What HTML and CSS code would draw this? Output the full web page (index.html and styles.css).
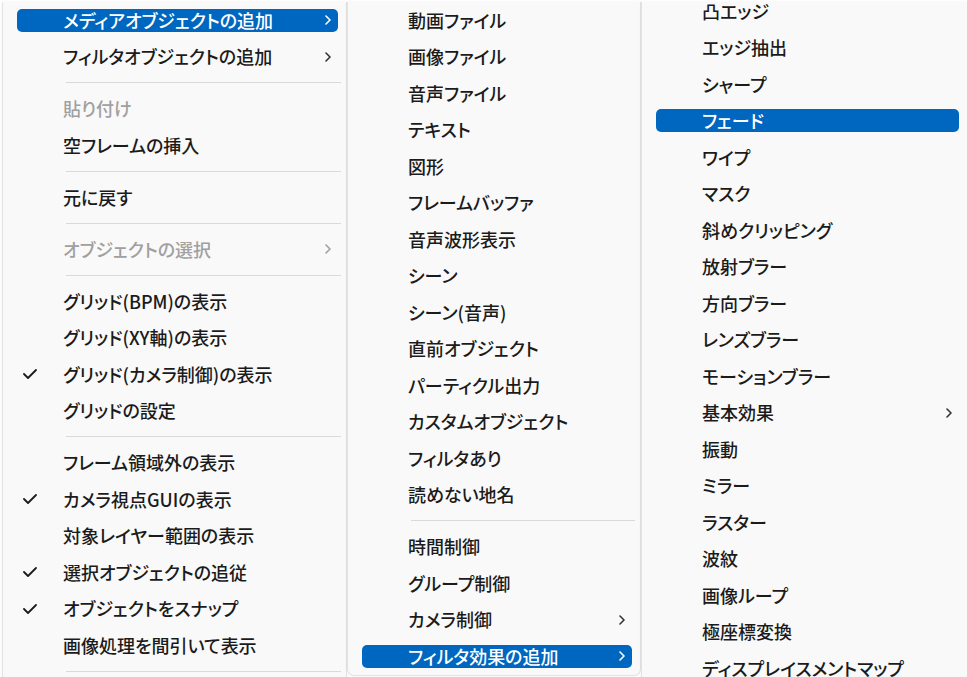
FILE: index.html
```html
<!DOCTYPE html>
<html lang="ja">
<head>
<meta charset="utf-8">
<title>Context menu</title>
<link rel="stylesheet" href="styles.css">
</head>
<body>
<div class="stage">
  <div class="menu menu-main">
    <div class="list">
      <div class="item"><div class="row hl"><span class="mark"></span><span class="label">メディアオブジェクトの追加</span><svg class="chev" viewBox="0 0 6 10"><path d="M1 1 L5 5 L1 9"/></svg></div></div>
      <div class="item"><div class="row"><span class="mark"></span><span class="label">フィルタオブジェクトの追加</span><svg class="chev" viewBox="0 0 6 10"><path d="M1 1 L5 5 L1 9"/></svg></div></div>
      <div class="sep"></div>
      <div class="item"><div class="row off"><span class="mark"></span><span class="label">貼り付け</span></div></div>
      <div class="item"><div class="row"><span class="mark"></span><span class="label">空フレームの挿入</span></div></div>
      <div class="sep"></div>
      <div class="item"><div class="row"><span class="mark"></span><span class="label">元に戻す</span></div></div>
      <div class="sep"></div>
      <div class="item"><div class="row off"><span class="mark"></span><span class="label">オブジェクトの選択</span><svg class="chev" viewBox="0 0 6 10"><path d="M1 1 L5 5 L1 9"/></svg></div></div>
      <div class="sep"></div>
      <div class="item"><div class="row"><span class="mark"></span><span class="label">グリッド(BPM)の表示</span></div></div>
      <div class="item"><div class="row"><span class="mark"></span><span class="label">グリッド(XY軸)の表示</span></div></div>
      <div class="item"><div class="row"><span class="mark"><svg class="tick" viewBox="0 0 14 10"><path d="M1 5 L5 9 L13 1"/></svg></span><span class="label">グリッド(カメラ制御)の表示</span></div></div>
      <div class="item"><div class="row"><span class="mark"></span><span class="label">グリッドの設定</span></div></div>
      <div class="sep"></div>
      <div class="item"><div class="row"><span class="mark"></span><span class="label">フレーム領域外の表示</span></div></div>
      <div class="item"><div class="row"><span class="mark"><svg class="tick" viewBox="0 0 14 10"><path d="M1 5 L5 9 L13 1"/></svg></span><span class="label">カメラ視点GUIの表示</span></div></div>
      <div class="item"><div class="row"><span class="mark"></span><span class="label">対象レイヤー範囲の表示</span></div></div>
      <div class="item"><div class="row"><span class="mark"><svg class="tick" viewBox="0 0 14 10"><path d="M1 5 L5 9 L13 1"/></svg></span><span class="label">選択オブジェクトの追従</span></div></div>
      <div class="item"><div class="row"><span class="mark"><svg class="tick" viewBox="0 0 14 10"><path d="M1 5 L5 9 L13 1"/></svg></span><span class="label">オブジェクトをスナップ</span></div></div>
      <div class="item"><div class="row"><span class="mark"></span><span class="label">画像処理を間引いて表示</span></div></div>
      <div class="sep"></div>
    </div>
  </div>

  <div class="menu menu-media">
    <div class="list">
      <div class="item"><div class="row"><span class="mark"></span><span class="label">動画ファイル</span></div></div>
      <div class="item"><div class="row"><span class="mark"></span><span class="label">画像ファイル</span></div></div>
      <div class="item"><div class="row"><span class="mark"></span><span class="label">音声ファイル</span></div></div>
      <div class="item"><div class="row"><span class="mark"></span><span class="label">テキスト</span></div></div>
      <div class="item"><div class="row"><span class="mark"></span><span class="label">図形</span></div></div>
      <div class="item"><div class="row"><span class="mark"></span><span class="label">フレームバッファ</span></div></div>
      <div class="item"><div class="row"><span class="mark"></span><span class="label">音声波形表示</span></div></div>
      <div class="item"><div class="row"><span class="mark"></span><span class="label">シーン</span></div></div>
      <div class="item"><div class="row"><span class="mark"></span><span class="label">シーン(音声)</span></div></div>
      <div class="item"><div class="row"><span class="mark"></span><span class="label">直前オブジェクト</span></div></div>
      <div class="item"><div class="row"><span class="mark"></span><span class="label">パーティクル出力</span></div></div>
      <div class="item"><div class="row"><span class="mark"></span><span class="label">カスタムオブジェクト</span></div></div>
      <div class="item"><div class="row"><span class="mark"></span><span class="label">フィルタあり</span></div></div>
      <div class="item"><div class="row"><span class="mark"></span><span class="label">読めない地名</span></div></div>
      <div class="sep"></div>
      <div class="item"><div class="row"><span class="mark"></span><span class="label">時間制御</span></div></div>
      <div class="item"><div class="row"><span class="mark"></span><span class="label">グループ制御</span></div></div>
      <div class="item"><div class="row"><span class="mark"></span><span class="label">カメラ制御</span><svg class="chev" viewBox="0 0 6 10"><path d="M1 1 L5 5 L1 9"/></svg></div></div>
      <div class="item"><div class="row hl"><span class="mark"></span><span class="label">フィルタ効果の追加</span><svg class="chev" viewBox="0 0 6 10"><path d="M1 1 L5 5 L1 9"/></svg></div></div>
    </div>
  </div>

  <div class="menu menu-filter">
    <div class="list scrolled">
      <div class="item"><div class="row"><span class="mark"></span><span class="label">凸エッジ</span></div></div>
      <div class="item"><div class="row"><span class="mark"></span><span class="label">エッジ抽出</span></div></div>
      <div class="item"><div class="row"><span class="mark"></span><span class="label">シャープ</span></div></div>
      <div class="item"><div class="row hl"><span class="mark"></span><span class="label">フェード</span></div></div>
      <div class="item"><div class="row"><span class="mark"></span><span class="label">ワイプ</span></div></div>
      <div class="item"><div class="row"><span class="mark"></span><span class="label">マスク</span></div></div>
      <div class="item"><div class="row"><span class="mark"></span><span class="label">斜めクリッピング</span></div></div>
      <div class="item"><div class="row"><span class="mark"></span><span class="label">放射ブラー</span></div></div>
      <div class="item"><div class="row"><span class="mark"></span><span class="label">方向ブラー</span></div></div>
      <div class="item"><div class="row"><span class="mark"></span><span class="label">レンズブラー</span></div></div>
      <div class="item"><div class="row"><span class="mark"></span><span class="label">モーションブラー</span></div></div>
      <div class="item"><div class="row"><span class="mark"></span><span class="label">基本効果</span><svg class="chev" viewBox="0 0 6 10"><path d="M1 1 L5 5 L1 9"/></svg></div></div>
      <div class="item"><div class="row"><span class="mark"></span><span class="label">振動</span></div></div>
      <div class="item"><div class="row"><span class="mark"></span><span class="label">ミラー</span></div></div>
      <div class="item"><div class="row"><span class="mark"></span><span class="label">ラスター</span></div></div>
      <div class="item"><div class="row"><span class="mark"></span><span class="label">波紋</span></div></div>
      <div class="item"><div class="row"><span class="mark"></span><span class="label">画像ループ</span></div></div>
      <div class="item"><div class="row"><span class="mark"></span><span class="label">極座標変換</span></div></div>
      <div class="item"><div class="row"><span class="mark"></span><span class="label">ディスプレイスメントマップ</span></div></div>
    </div>
  </div>
</div>
</body>
</html>
```

FILE: styles.css
```css
html, body {
  margin: 0;
  padding: 0;
  background: #ffffff;
  overflow: hidden;
}

body {
  font-family: "Noto Sans CJK JP", "Noto Sans", sans-serif;
  font-feature-settings: "palt" 1;
  font-size: 18px;
  font-weight: 500;
  color: #1b1b1b;
}

.stage {
  display: flex;
  align-items: flex-start;
  height: 677px;
  overflow: hidden;
  padding: 2px 0 0 2px;
  box-sizing: border-box;
}

.menu {
  background: #f9f9f9;
  border: 1px solid #e3e3e3;
  border-top: none;
  box-sizing: border-box;
  overflow: hidden;
  flex: none;
  box-shadow: 0 0 3px rgba(0, 0, 0, 0.06);
}

.menu-main {
  width: 345px;
  height: 720px;
  border-radius: 0 0 6px 6px;
}

.menu-media {
  width: 294px;
  height: 674px;
  border-radius: 0 0 7px 7px;
}

.menu-filter {
  width: 327px;
  height: 720px;
}

.list {
  display: flex;
  flex-direction: column;
}

.list.scrolled {
  margin-top: -9px;
}

.item {
  height: 36.5px;
  box-sizing: border-box;
  padding: 6.75px 8px 6.75px 14px;
  display: flex;
}

.row {
  flex: 1;
  display: flex;
  align-items: center;
  border-radius: 5px;
  padding-right: 7px;
  line-height: 23px;
  white-space: nowrap;
}

.row.hl {
  background: #0067c0;
  color: #ffffff;
}

.row.off {
  color: #a0a0a0;
}

.mark {
  width: 46px;
  flex: none;
  display: flex;
  align-items: center;
  padding-left: 6px;
  box-sizing: border-box;
}

.label {
  flex: 1;
}

.tick {
  width: 14px;
  height: 10px;
  fill: none;
  stroke: #1b1b1b;
  stroke-width: 1.8;
  stroke-linecap: round;
  stroke-linejoin: round;
}

.chev {
  width: 6px;
  height: 10px;
  flex: none;
  fill: none;
  stroke: #333333;
  stroke-width: 1.6;
  stroke-linecap: round;
  stroke-linejoin: round;
}

.row.hl .chev {
  stroke: #ffffff;
}

.row.off .chev {
  stroke: #a0a0a0;
}

.sep {
  height: 15.5px;
  display: flex;
  align-items: center;
  padding: 0 5px 0 63px;
}

.sep::before {
  content: "";
  flex: 1;
  height: 1px;
  background: #d9d9d9;
}
```
